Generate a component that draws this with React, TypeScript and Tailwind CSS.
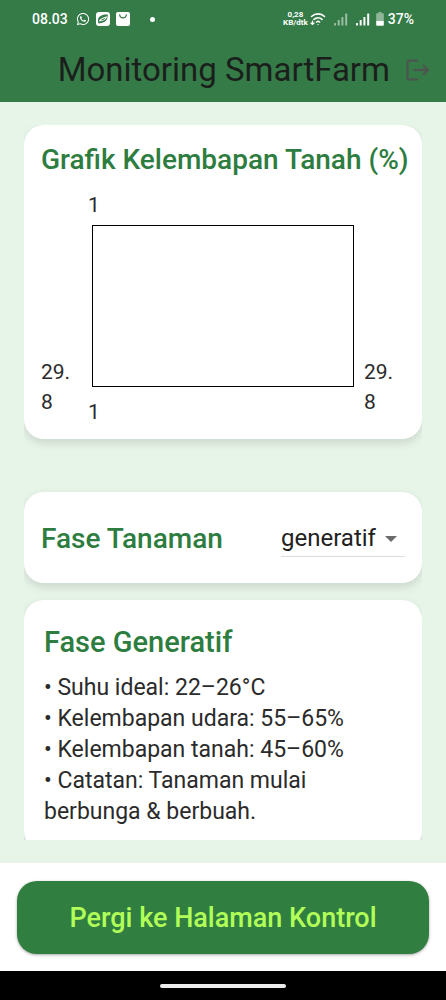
import { useState } from "react";
import type { ReactNode } from "react";
import { FaWhatsapp } from "react-icons/fa";
import { MdLogout } from "react-icons/md";

const phases: Record<string, { title: string; notes: string[] }> = {
  vegetatif: {
    title: "Fase Vegetatif",
    notes: ["Suhu ideal: 24–28°C", "Kelembapan udara: 60–70%", "Kelembapan tanah: 50–70%"],
  },
  generatif: {
    title: "Fase Generatif",
    notes: [
      "Suhu ideal: 22–26°C",
      "Kelembapan udara: 55–65%",
      "Kelembapan tanah: 45–60%",
      "Catatan: Tanaman mulai berbunga & berbuah.",
    ],
  },
};

function SignalIcon({ className }: { className?: string }) {
  return (
    <svg viewBox="0 0 14 13" className={`h-[13px] w-3.5 ${className ?? ""}`} fill="currentColor">
      <rect x="0" y="10" width="2" height="2.5" rx="0.5" />
      <rect x="3.7" y="7" width="2" height="5.5" rx="0.5" />
      <rect x="7.4" y="4" width="2" height="8.5" rx="0.5" />
      <rect x="11.2" y="0.5" width="2" height="12" rx="0.5" />
    </svg>
  );
}

function StatusBar() {
  return (
    <div className="flex h-[38px] items-center justify-between px-8 text-white">
      <div className="flex items-center">
        <span className="w-11 text-sm font-medium">08.03</span>
        <FaWhatsapp className="h-3.5 w-3.5" />
        <svg viewBox="0 0 14 14" className="ml-1.5 h-3.5 w-3.5">
          <rect width="14" height="14" rx="3" fill="#fff" />
          <path d="M2 7.500C2.500 4.500 6 2.400 11.800 2.600 12 7.500 9.500 11.200 2.600 11.400 1.900 10.200 1.800 8.800 2 7.500z" fill="#357b48" />
          <path d="M2.600 9.200C4.500 6 7.500 5.200 11.400 4.200 10 7.500 7.500 9.300 2.600 9.200z" fill="#fff" />
          <path d="M4.500 8.400C6 7 8 6.200 9.600 5.700 8.600 7.300 6.800 8.400 4.500 8.400z" fill="#357b48" />
        </svg>
        <svg viewBox="0 0 14 14" className="ml-1.5 h-3.5 w-3.5">
          <rect width="14" height="14" rx="2" fill="#fff" />
          <path d="M3.600 2.800c.5 4.200 6.300 4.200 6.800 0" fill="none" stroke="#357b48" strokeWidth="1.200" strokeLinecap="round" />
        </svg>
        <span className="ml-5 h-[5px] w-[5px] rounded-full bg-white" />
      </div>
      <div className="flex items-center">
        <div className="text-center text-[8px] leading-[8px] font-bold">
          <div>0,28</div>
          <div>KB/dtk</div>
        </div>
        <svg viewBox="0 0 16 14" className="ml-0.5 h-3.5 w-4" fill="none" stroke="currentColor" strokeWidth="1.600" strokeLinecap="round">
          <path d="M1.500 4.500C5.300 1 11 1 14.500 4.500M4 7.400c2.400-2 5.800-2 8 0M6.600 10c1-.8 2-.8 3 0" />
          <path d="M8 12.500h.1M2.500 9v3.500M1 11l1.500 1.500L4 11" strokeWidth="1.200" />
        </svg>
        <SignalIcon className="ml-2 opacity-50" />
        <SignalIcon className="ml-2" />
        <svg viewBox="0 0 8 14" className="ml-1.5 h-3.5 w-2">
          <path d="M2.500 0h3v1.300H7a.8.8 0 0 1 .8.8V9H.2V2.100A.8.8 0 0 1 1 1.300h1.500z" fill="#fff" opacity=".45" />
          <path d="M.2 9h7.600v4a.8.8 0 0 1-.8.8H1a.8.8 0 0 1-.8-.8z" fill="#fff" />
        </svg>
        <span className="ml-1 text-sm font-medium">37%</span>
      </div>
    </div>
  );
}

function Card({ className, children }: { className?: string; children: ReactNode }) {
  return (
    <section className={`rounded-[20px] bg-white shadow-[0_4px_10px_rgba(0,0,0,0.12)] ${className ?? ""}`}>
      {children}
    </section>
  );
}

function MoistureChart() {
  return (
    <div className="mt-3 grid grid-cols-[51px_1fr_51px] grid-rows-[35px_162px_40px] text-[21px] leading-[30px] text-[#2b2b2b]">
      <div className="col-start-2 row-start-1 -ml-1">1</div>
      <div className="col-start-2 row-start-2 border border-black" />
      <div className="col-start-1 row-span-2 row-start-2 mb-2.5 self-end">
        29.
        <br />8
      </div>
      <div className="col-start-3 row-span-2 row-start-2 mb-2.5 self-end pl-2.5">
        29.
        <br />8
      </div>
      <div className="col-start-2 row-start-3 -ml-1 self-end">1</div>
    </div>
  );
}

export default function App() {
  const [phase, setPhase] = useState("generatif");
  const { title, notes } = phases[phase];

  return (
    <div className="flex h-screen flex-col bg-[#e7f4e8] font-[Roboto,sans-serif]">
      <header className="shrink-0 bg-[#357b48]">
        <StatusBar />
        <div className="flex h-16 items-center justify-end pr-3.5">
          <h1 className="text-[33px] leading-10 whitespace-nowrap text-[#1b1f1c]">Monitoring SmartFarm</h1>
          <button type="button" aria-label="Keluar" className="ml-3.5 text-[#4b574e]">
            <MdLogout className="h-7 w-7" />
          </button>
        </div>
      </header>

      <main className="flex min-h-0 flex-1 flex-col px-6 py-[23px]">
        <div className="min-h-0 flex-1 overflow-y-auto [scrollbar-width:none]">
          <Card className="px-[17px] pt-[17px] pb-3">
            <h2 className="text-[28px] leading-9 font-medium whitespace-nowrap text-[#2e7d40]">Grafik Kelembapan Tanah (%)</h2>
            <MoistureChart />
          </Card>

          <Card className="mt-[53px] flex h-[91px] items-center justify-between px-[17px] pt-0.5">
            <label htmlFor="phase" className="text-[28px] leading-9 font-medium text-[#2e7d40]">
              Fase Tanaman
            </label>
            <div className="relative border-b border-[#dcdcdc]">
              <select
                id="phase"
                value={phase}
                onChange={(e) => setPhase(e.target.value)}
                className="w-[124px] appearance-none bg-transparent text-2xl leading-9 text-[#212121] outline-none"
              >
                {Object.keys(phases).map((name) => (
                  <option key={name} value={name}>
                    {name}
                  </option>
                ))}
              </select>
              <svg viewBox="0 0 12 6" className="pointer-events-none absolute top-4 right-2 h-1.5 w-3">
                <path d="M0 0h12L6 6z" fill="#6b6b6b" />
              </svg>
            </div>
          </Card>

          <Card className="mt-[17px] px-5 pt-6 pb-6">
            <h2 className="text-[29px] leading-9 font-medium text-[#2e7d40]">{title}</h2>
            <ul className="mt-3 text-[23px] leading-[31px] text-[#2b2b2b]">
              {notes.map((note) => (
                <li key={note}>{`• ${note}`}</li>
              ))}
            </ul>
          </Card>
        </div>
      </main>

      <footer className="shrink-0 bg-white px-[17px] pt-[18px] pb-[17px]">
        <button
          type="button"
          className="h-[73px] w-full rounded-[20px] bg-[#307e40] pt-0.5 text-[27px] font-medium text-[#b2ff59] shadow-[0_1px_3px_rgba(0,0,0,0.35)]"
        >
          Pergi ke Halaman Kontrol
        </button>
      </footer>
      <div className="flex h-[29px] shrink-0 items-center justify-center bg-black">
        <span className="h-1 w-[126px] rounded-full bg-[#ececec]" />
      </div>
    </div>
  );
}
